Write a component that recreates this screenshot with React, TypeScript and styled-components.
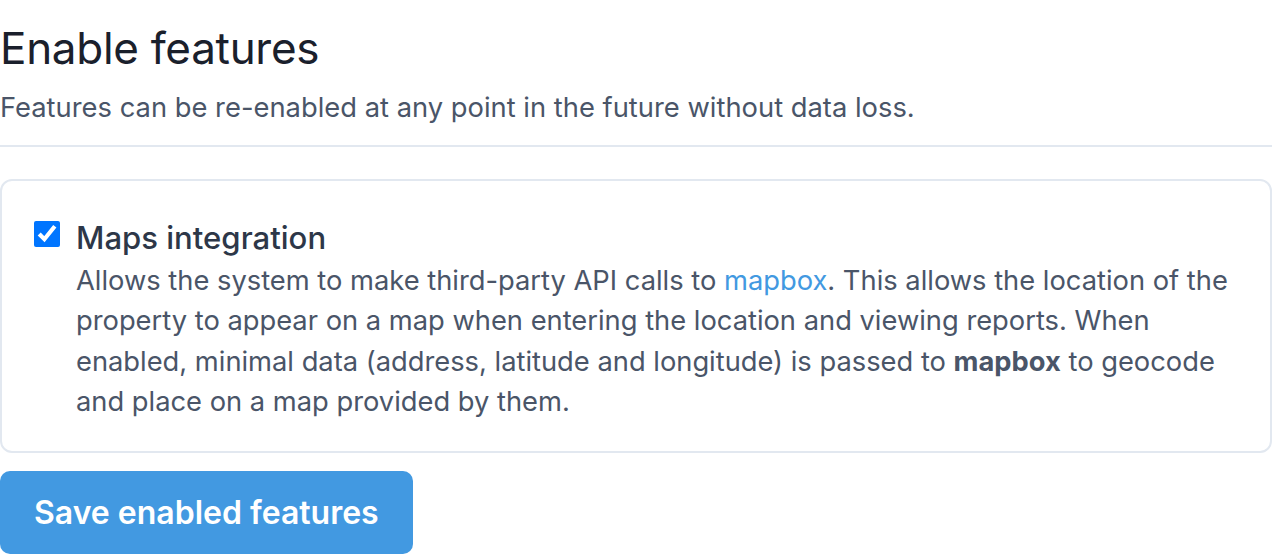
import React from "react";
import styled, { createGlobalStyle } from "styled-components";

const Global = createGlobalStyle`
  html, body { margin: 0; padding: 0; background: #ffffff; }
  body { font-family: Inter, "Noto Sans", "Liberation Sans", sans-serif; -webkit-font-smoothing: antialiased; }
  * { box-sizing: border-box; }
`;

const Page = styled.div`
  width: 1272px;
  display: flex;
  flex-direction: column;
`;

const Header = styled.header`
  display: flex;
  flex-direction: column;
  padding-top: 20px;
  padding-bottom: 17px;
  border-bottom: 2px solid #e2e8f0;
`;

const Title = styled.h1`
  margin: 0;
  font-size: 44px;
  font-weight: 400;
  line-height: 56px;
  color: #1a202c;
  letter-spacing: -0.3px;
`;

const Subtitle = styled.p`
  margin: 12px 0 0;
  font-size: 27.35px;
  line-height: 40px;
  color: #4a5568;
`;

const Card = styled.section`
  margin-top: 32px;
  border: 2px solid #e2e8f0;
  border-radius: 12px;
  padding: 37px 33px 29px 32px;
  display: flex;
  gap: 16px;
  align-items: flex-start;
`;

const Check = styled.input`
  width: 26px;
  height: 26px;
  margin: 3px 0 0;
  accent-color: #0075ff;
  flex: none;
`;

const Body = styled.div`
  display: flex;
  flex-direction: column;
`;

const Label = styled.label`
  font-size: 31.1px;
  line-height: 40px;
  margin-bottom: 3px;
  font-weight: 500;
  color: #2d3748;
`;

const Text = styled.p`
  margin: 0;
  font-size: 27.3px;
  line-height: 40.3px;
  color: #4a5568;
`;

const Link = styled.a`
  color: #4299e1;
  text-decoration: none;
`;

const Strong = styled.strong`
  font-weight: 700;
`;

const Button = styled.button`
  margin-top: 18px;
  align-self: flex-start;
  background: #4299e1;
  color: #ffffff;
  border: none;
  border-radius: 10px;
  height: 83px;
  padding: 0 34px;
  font-family: inherit;
  font-size: 32px;
  font-weight: 600;
  cursor: pointer;
`;

export default function App() {
  return (
    <>
      <Global />
      <Page>
        <Header>
          <Title>Enable features</Title>
          <Subtitle>Features can be re-enabled at any point in the future without data loss.</Subtitle>
        </Header>
        <Card>
          <Check type="checkbox" id="maps" defaultChecked />
          <Body>
            <Label htmlFor="maps">Maps integration</Label>
            <Text>
              Allows the system to make third-party API calls to <Link href="#">mapbox</Link>. This allows the
              location of the property to appear on a map when entering the location and viewing reports. When
              enabled, minimal data (address, latitude and longitude) is passed to <Strong>mapbox</Strong> to geocode
              and place on a map provided by them.
            </Text>
          </Body>
        </Card>
        <Button>Save enabled features</Button>
      </Page>
    </>
  );
}
